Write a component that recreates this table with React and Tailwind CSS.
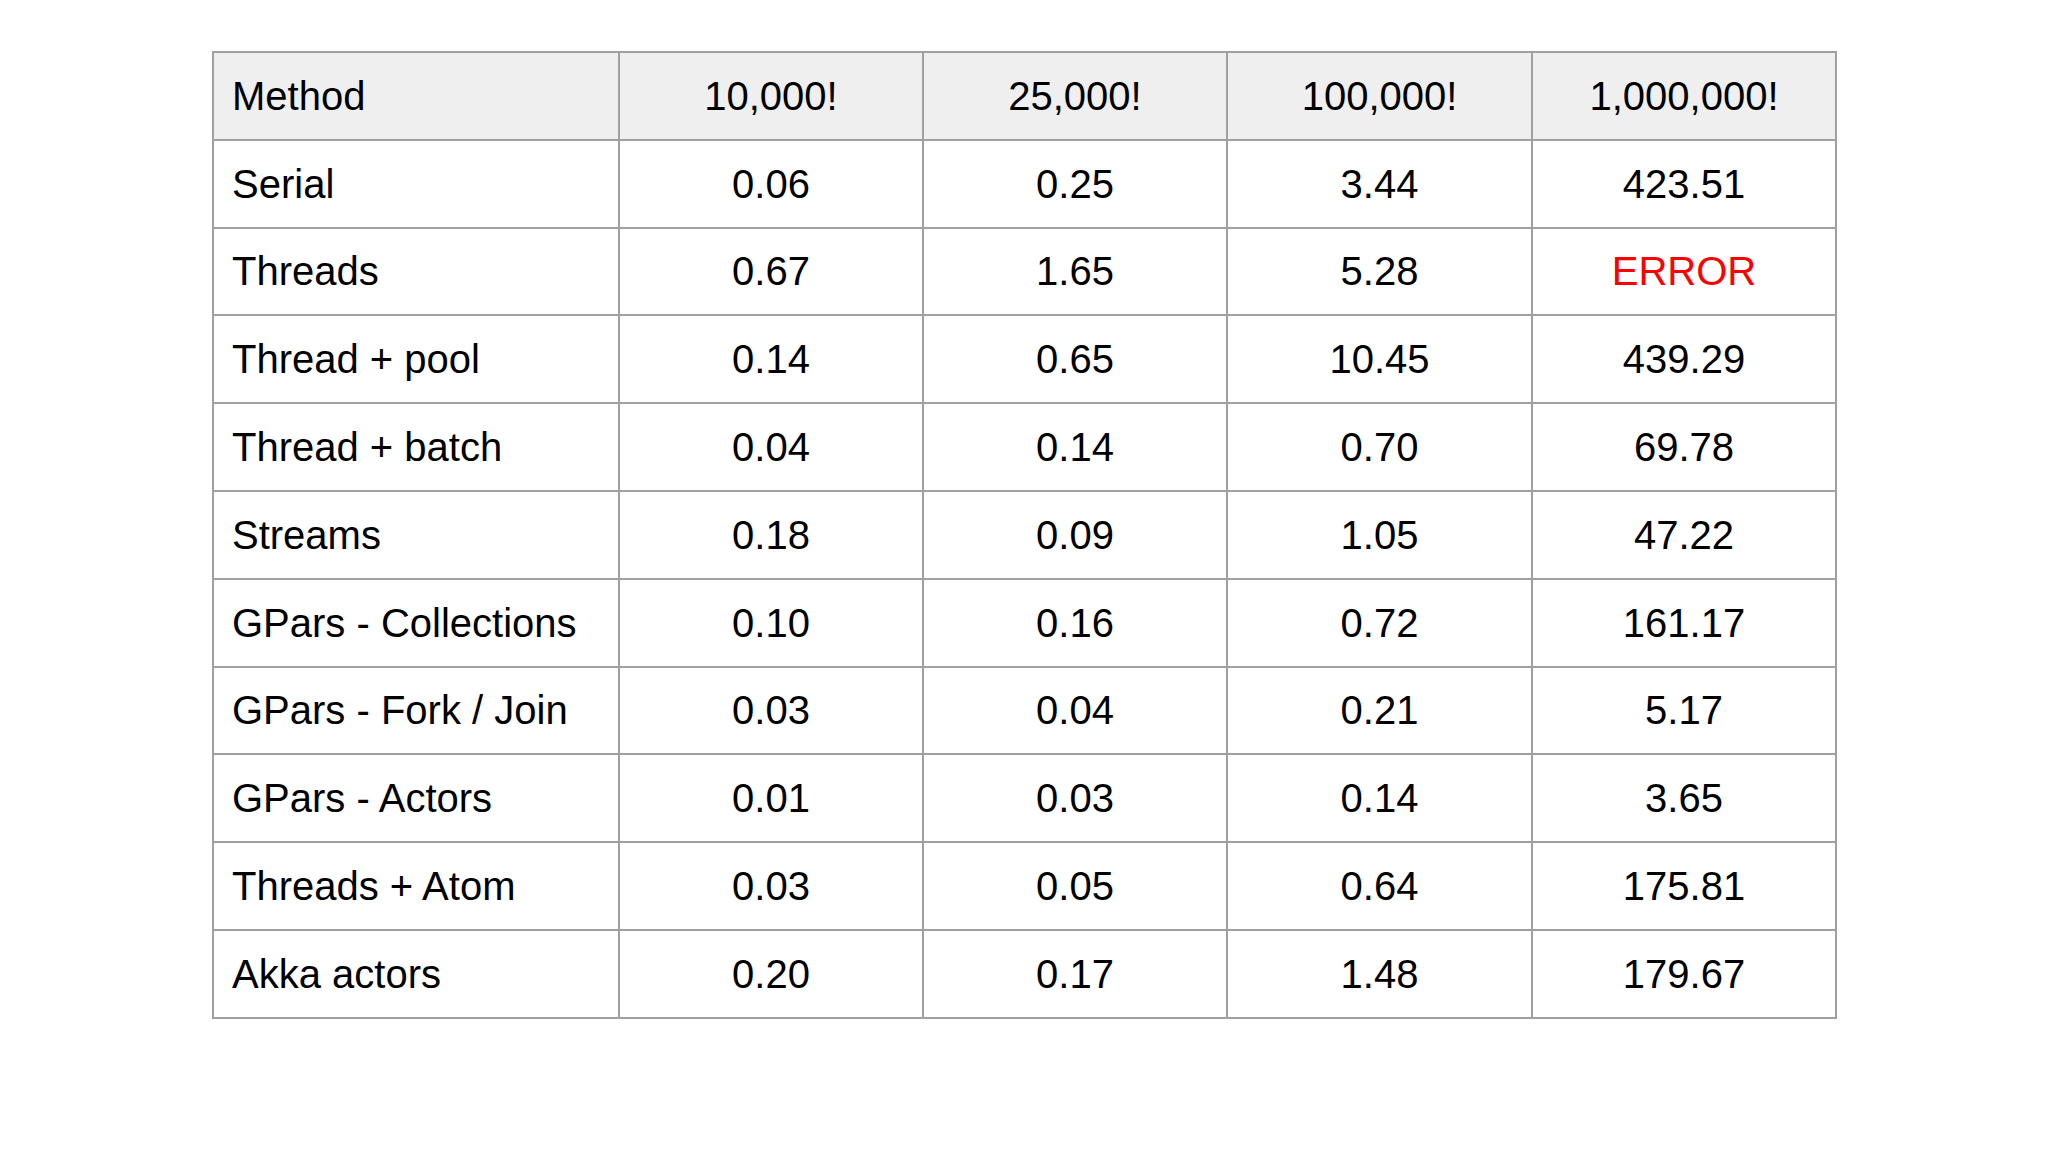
import React from "react";

const cols = ["10,000!", "25,000!", "100,000!", "1,000,000!"];

const rows = [
  ["Serial", "0.06", "0.25", "3.44", "423.51"],
  ["Threads", "0.67", "1.65", "5.28", "ERROR"],
  ["Thread + pool", "0.14", "0.65", "10.45", "439.29"],
  ["Thread + batch", "0.04", "0.14", "0.70", "69.78"],
  ["Streams", "0.18", "0.09", "1.05", "47.22"],
  ["GPars - Collections", "0.10", "0.16", "0.72", "161.17"],
  ["GPars - Fork / Join", "0.03", "0.04", "0.21", "5.17"],
  ["GPars - Actors", "0.01", "0.03", "0.14", "3.65"],
  ["Threads + Atom", "0.03", "0.05", "0.64", "175.81"],
  ["Akka actors", "0.20", "0.17", "1.48", "179.67"],
];

const cell = "border-2 border-[#a0a0a0] h-[87.8px] p-0";

const App = () => {
  return (
    <div className="w-[2048px] h-[1152px] bg-white pt-[51px] pl-[212px] font-['Liberation_Sans',Arial,sans-serif] text-[40px] text-black leading-none">
      <table className="table-fixed border-collapse w-[1623px]">
        <colgroup>
          <col className="w-[406px]" />
          <col className="w-[304px]" />
          <col className="w-[304px]" />
          <col className="w-[305px]" />
          <col className="w-[304px]" />
        </colgroup>
        <thead>
          <tr className="bg-[#efefef]">
            <th className={`${cell} text-left font-normal pl-[18px]`}>Method</th>
            {cols.map((c) => (
              <th key={c} className={`${cell} text-center font-normal`}>
                {c}
              </th>
            ))}
          </tr>
        </thead>
        <tbody>
          {rows.map((r) => (
            <tr key={r[0]}>
              <td className={`${cell} text-left pl-[18px]`}>{r[0]}</td>
              {r.slice(1).map((v, i) => (
                <td
                  key={i}
                  className={`${cell} text-center ${v === "ERROR" ? "text-[#ff0000]" : ""}`}
                >
                  {v}
                </td>
              ))}
            </tr>
          ))}
        </tbody>
      </table>
    </div>
  );
};

export default App;
